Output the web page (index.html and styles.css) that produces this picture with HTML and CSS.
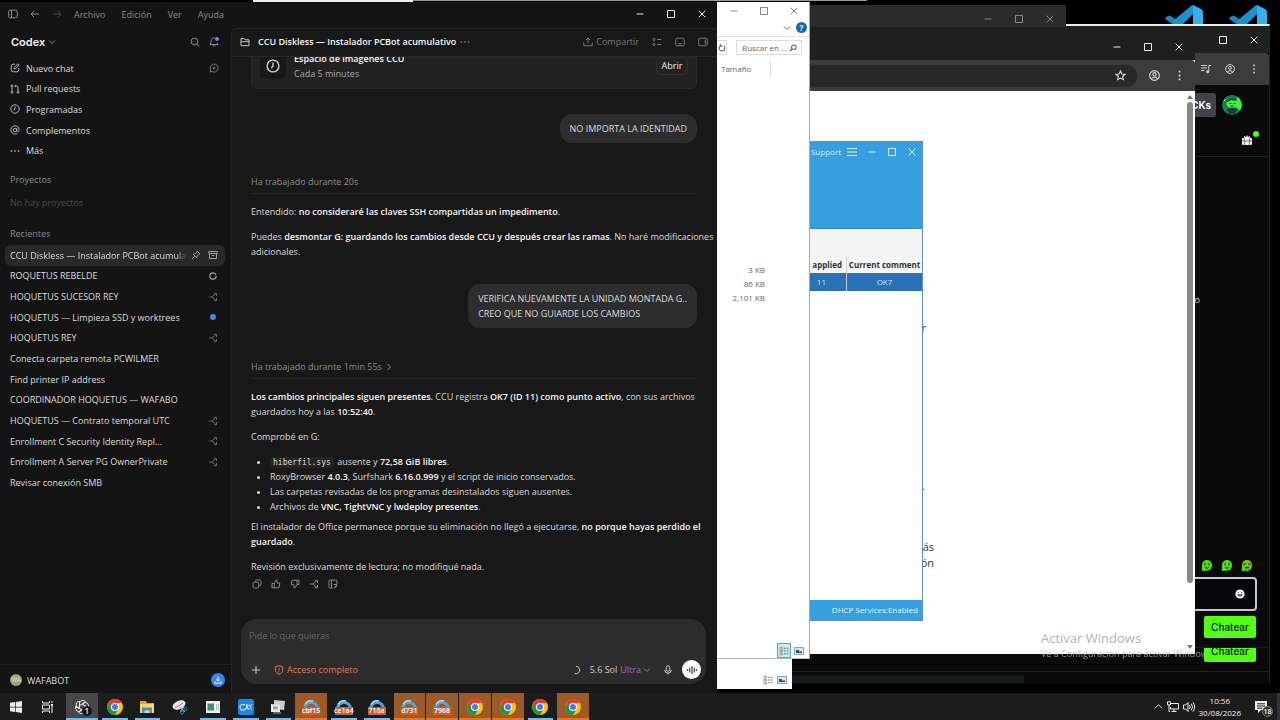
FILE: index.html
```html
<!DOCTYPE html>
<html lang="es">
<head>
<meta charset="utf-8">
<title>Escritorio</title>
<link rel="stylesheet" href="styles.css">
</head>
<body>
<svg class="sprites" aria-hidden="true">
  <symbol id="min" viewBox="0 0 10 10"><path d="M1.5 5h7"/></symbol>
  <symbol id="max" viewBox="0 0 10 10"><path d="M1.5 1.5h7v7h-7z"/></symbol>
  <symbol id="close" viewBox="0 0 10 10"><path d="M1.7 1.7l6.6 6.6M8.3 1.7L1.7 8.3"/></symbol>
  <symbol id="menu" viewBox="0 0 10 10"><path d="M0 1.5h10M0 5h10M0 8.500h10"/></symbol>
  <symbol id="panel" viewBox="0 0 10 10"><rect x=".7" y="1.200" width="8.600" height="7.600" rx="1.500"/><path d="M3.500 1.200v7.600"/></symbol>
  <symbol id="left" viewBox="0 0 10 10"><path d="M9 5H1M4 2L1 5l3 3"/></symbol>
  <symbol id="right" viewBox="0 0 10 10"><path d="M1 5h8M6 2l3 3-3 3"/></symbol>
  <symbol id="down" viewBox="0 0 10 10"><path d="M2 3.500l3 3 3-3"/></symbol>
  <symbol id="next" viewBox="0 0 10 10"><path d="M3.500 2l3 3-3 3"/></symbol>
  <symbol id="up" viewBox="0 0 10 10"><path d="M1 7l4-4 4 4"/></symbol>
  <symbol id="search" viewBox="0 0 10 10"><circle cx="4.500" cy="4.500" r="3.400"/><path d="M7 7l2.300 2.300"/></symbol>
  <symbol id="bell" viewBox="0 0 10 10"><path d="M5.700 1C3.500.5 2 2 2 4v1.500L1 7.500h8L8 5.800M3.800 8.800h2.400"/></symbol>
  <symbol id="edit" viewBox="0 0 10 10"><path d="M5 1.200H3.200a2 2 0 0 0-2 2v3.600a2 2 0 0 0 2 2h3.600a2 2 0 0 0 2-2V5M4 6l.3-1.700L8 .8l1.200 1.200-3.500 3.700z"/></symbol>
  <symbol id="bubble" viewBox="0 0 10 10"><path d="M1 9l.6-2A4 4 0 1 1 3 8.500zM5 3.500v3M3.500 5h3"/></symbol>
  <symbol id="pull" viewBox="0 0 10 10"><circle cx="2" cy="1.800" r="1"/><circle cx="2" cy="8.200" r="1"/><circle cx="8" cy="8.200" r="1"/><path d="M2 3v4M8 7V3.500Q8 2 6.500 2H5M6 .8L4.800 2 6 3.200"/></symbol>
  <symbol id="clock" viewBox="0 0 10 10"><circle cx="5" cy="5" r="4.200"/><path d="M5 2.500V5L3.800 6.500"/></symbol>
  <symbol id="at" viewBox="0 0 10 10"><circle cx="5" cy="5" r="1.800"/><path d="M6.800 3.200v2.600c0 1.300 2.400 1 2.400-.8a4.200 4.200 0 1 0-2 3.500"/></symbol>
  <symbol id="dots" viewBox="0 0 10 10"><path class="fill" d="M.6 4.300h1.500v1.500H.6zM4.200 4.300h1.500v1.500H4.200zM7.800 4.300h1.500v1.500H7.800z"/></symbol>
  <symbol id="kebab" viewBox="0 0 10 10"><path class="fill" d="M4.200.6h1.600v1.600H4.200zM4.200 4.200h1.600v1.600H4.200zM4.200 7.800h1.600v1.600H4.200z"/></symbol>
  <symbol id="pin" viewBox="0 0 10 10"><path d="M6 1l3 3-1.500.4-1.300 1.400-.4 2L2.200 4.200l2-.4L5.600 2.500zM3.800 6.200L1 9"/></symbol>
  <symbol id="archive" viewBox="0 0 10 10"><path d="M.8 1.500h8.400v2H.8zM1.500 3.500v5h7v-5M3.800 5.500h2.400"/></symbol>
  <symbol id="ring" viewBox="0 0 10 10"><circle cx="5" cy="5" r="3.200" stroke-dasharray="18.500 1.600" stroke-width="1.200"/></symbol>
  <symbol id="branch" viewBox="0 0 10 10"><path d="M.8 5H4l4-3.500M4 5l4 3.500M5.800 1.300H8.500V4M5.800 8.700h2.700V6"/></symbol>
  <symbol id="folder" viewBox="0 0 10 10"><path d="M1 8.700V1.500h3l1 1.300h4v5.900zM1 4.700h8"/></symbol>
  <symbol id="share" viewBox="0 0 10 10"><path d="M5 6.500V1M3 3l2-2 2 2M.8 5.500v3.200h8.400V5.500"/></symbol>
  <symbol id="download" viewBox="0 0 10 10"><path d="M5 1.500v4.500M3.200 4.400L5 6.200l1.800-1.800M1.800 6.500v1.700h6.400V6.500"/></symbol>
  <symbol id="list" viewBox="0 0 10 10"><path d="M5 2.500h4.500M5 7.500h4.500"/><circle cx="2" cy="2.500" r="1.100"/><circle cx="2" cy="7.500" r="1.100"/></symbol>
  <symbol id="dock" viewBox="0 0 10 10"><rect x=".7" y="1.200" width="8.600" height="7.600" rx="1.500"/><path d="M3 6.800h4"/></symbol>
  <symbol id="side" viewBox="0 0 10 10"><rect x=".7" y="1.200" width="8.600" height="7.600" rx="1.500"/><path d="M7.300 2.500v5"/></symbol>
  <symbol id="copy" viewBox="0 0 10 10"><rect x="1" y="3.200" width="5.800" height="5.800" rx="1.500"/><path d="M3.200 3V2.500Q3.200 1 4.700 1h2.800Q9 1 9 2.500v2.800q0 1.500-2 1.500"/></symbol>
  <symbol id="thumb" viewBox="0 0 10 10"><path d="M1 4.500h2.200v4.300H1zM3.200 4.500L5 1q1.500 0 1.200 1.500L6 4h2.800L8.200 8q-.3.800-1.200.8H3.200"/></symbol>
  <symbol id="thumbdown" viewBox="0 0 10 10"><path d="M1.200 5.500L1.800 2q.2-.8 1-.8H7v4.200L5 9Q3.500 9 3.800 7.500L4 5.800zM7 1.200h2v4.200H7"/></symbol>
  <symbol id="note" viewBox="0 0 10 10"><path d="M4.500 9H2.200Q1 9 1 7.800V2.200Q1 1 2.200 1h5.600Q9 1 9 2.200v3M3.500 1v8M5.500 5.500h3.700M5.800 9l3-3M6.500 9L9 7"/></symbol>
  <symbol id="plus" viewBox="0 0 10 10"><path d="M5 1v8M1 5h8"/></symbol>
  <symbol id="shield" viewBox="0 0 10 10"><path d="M5 .7l3.700 1.200V5c0 2.200-1.700 3.500-3.700 4.400C3 8.500 1.300 7.200 1.300 5V1.900zM5 3v2.400M5 6.500v.8"/></symbol>
  <symbol id="load" viewBox="0 0 10 10"><path d="M5 1.300A3.700 3.700 0 1 1 3.500 8.400"/></symbol>
  <symbol id="mic" viewBox="0 0 10 10"><rect x="3.300" y=".8" width="3.400" height="5.500" rx="1.700"/><path d="M1.700 4.800a3.300 3.300 0 0 0 6.600 0M5 8v1.500"/></symbol>
  <symbol id="wave" viewBox="0 0 10 10"><path d="M.7 4v2M2.800 2.500v5M5 1v8M7.200 2.500v5M9.300 4v2"/></symbol>
  <symbol id="star" viewBox="0 0 10 10"><path d="M5 .9l1.200 2.700 3 .3-2.300 2 .7 2.900L5 7.300 2.400 8.800l.7-2.900-2.300-2 3-.3z"/></symbol>
  <symbol id="user" viewBox="0 0 10 10"><circle cx="5" cy="5" r="4.400"/><circle cx="5" cy="3.900" r="1.500"/><path d="M2.200 7.800q2.800-2.400 5.600 0"/></symbol>
  <symbol id="music" viewBox="0 0 10 10"><path d="M0 1.500h6M0 4h6M0 6.500h3.500M7.800 7.500v-6H10"/><circle class="fill" cx="6.600" cy="7.700" r="1.500"/></symbol>
  <symbol id="reload" viewBox="0 0 10 10"><path d="M7.500 2.500A3.600 3.600 0 1 1 3 2M3 0v2.600h2.600" stroke-width="1.400"/></symbol>
  <symbol id="find" viewBox="0 0 10 10"><circle cx="6" cy="4" r="2.800" stroke-width="1.400"/><path d="M4 6L1 9" stroke-width="1.600"/></symbol>
  <symbol id="details" viewBox="0 0 11 10"><path d="M1 1h3v2H1zM1 4.500h3v1.500H1zM1 7.500h3v2H1z" stroke="#999"/><path d="M5.500 2h2M8.500 2h2M5.500 5h2M8.500 5h2M5.500 8h2M8.500 8h2" stroke="#666"/></symbol>
  <symbol id="thumbs" viewBox="0 0 10 10"><path d="M.5 1.500h9v7h-9z" fill="#cde8f5" stroke="#999"/><path d="M2 4h3v1.500h3V7H2z" fill="#24506e" stroke="none"/></symbol>
  <symbol id="vscode" viewBox="0 0 40 20"><path d="M1 14q0-2 3-3 2-1 4 1l12 8H10z" fill="#1785c4" stroke="none"/><path d="M9 16L27 1q1-1 2-1v9L18 20h-6z" fill="#1c90d2" stroke="none"/><path d="M29 0l8 4q2 1 2 3v13H29z" fill="#35aef0" stroke="none"/></symbol>
  <symbol id="windows" viewBox="0 0 12 12"><path class="fill" d="M0 1.700L5.300 1v4.700H0zM6 .9L12 0v5.700H6zM0 6.400h5.300V11L0 10.300zM6 6.400h6V12l-6-.9z"/></symbol>
  <symbol id="tasks" viewBox="0 0 12 12"><path d="M.5 0v2h7V0M.5 12v-2h7v2M.5 4h7v4h-7zM10 0v2M10 5v7"/><path class="fill" d="M9 3h2v2H9z"/></symbol>
  <symbol id="openai" viewBox="0 0 16 16"><g stroke-width=".9"><path id="petal" d="M5.500 9.500V4.200A3.300 3.300 0 0 1 11.500 2.800M8 5l4-2.200"/><use href="#petal" transform="rotate(60 8 8)"/><use href="#petal" transform="rotate(120 8 8)"/><use href="#petal" transform="rotate(180 8 8)"/><use href="#petal" transform="rotate(240 8 8)"/><use href="#petal" transform="rotate(300 8 8)"/></g></symbol>
  <symbol id="chrome" viewBox="0 0 16 16"><circle cx="8" cy="8" r="8" fill="#fbc116" stroke="none"/><path d="M1.100 4A8 8 0 0 0 8 16l3.500-6L8 8 4.500 10z" fill="#229342" stroke="none"/><path d="M8 4h6.900A8 8 0 0 0 1.100 4l3.400 6z" fill="#e33b2e" stroke="none"/><circle cx="8" cy="8" r="4" fill="#fff" stroke="none"/><circle cx="8" cy="8" r="3" fill="#3b7ded" stroke="none"/></symbol>
  <symbol id="files" viewBox="0 0 16 16"><path d="M1 2h6l1 2h7v10H1z" fill="#e5a71c" stroke="none"/><path d="M1 5h14v9H1z" fill="#ffd667" stroke="none"/><path d="M3 14V8.500h10V14h-2.500v-2.500h-5V14z" fill="#3a96d5" stroke="none"/></symbol>
  <symbol id="snip" viewBox="0 0 16 16"><ellipse cx="7" cy="6" rx="6.800" ry="4.200" fill="#e9e2e6" stroke="none" transform="rotate(-25 7 6)"/><path d="M3 9l8-5" stroke="#c33a55" stroke-width=".7"/><path d="M7 8l6 5M12 8l-4 5" stroke="#bbb"/><circle cx="13.500" cy="10" r="1.600" stroke="#1a8bbd"/><circle cx="10" cy="13.500" r="1.600" stroke="#1a8bbd"/></symbol>
  <symbol id="sheet" viewBox="0 0 16 16"><path d="M1 2h14v12H1z" fill="#eef0ee" stroke="none"/><path d="M2.500 4.500h6.500v7H2.500z" fill="#3c8f7d" stroke="none"/><path d="M11.500 5v6M13.500 5v6" stroke="#bbb"/></symbol>
  <symbol id="ccu" viewBox="0 0 16 16"><rect width="16" height="16" rx="2.500" fill="#1c86e6" stroke="none"/><path d="M7 6q-5-2-5 2.500T8 10q3-5.500 4.500-3.500T11 10 9 5M13 5l1 1M13 11l1-1" stroke="#fff"/></symbol>
  <symbol id="pcs" viewBox="0 0 16 16"><path d="M4 1l11 1-1 9-10-1z" fill="#c9cfcf" stroke="none"/><path d="M1 5l9 1v7H1z" fill="#e8eceb" stroke="none"/><path d="M3 7l5 .5v3H3z" fill="#9daaa8" stroke="none"/><path d="M3 14h8" stroke="#aaa"/></symbol>
  <symbol id="arc" viewBox="0 0 16 16"><path d="M1.500 10a6.500 6.500 0 0 1 13 0" stroke="#4fa3e2" stroke-width="3"/><path d="M2 5.500A7 7 0 0 1 10 2" stroke="#b8dcf5" stroke-width="1.500"/></symbol>
  <symbol id="net" viewBox="0 0 12 12"><path d="M4 2.500h7.500v5.500H3.500V6M7 8v2.500M4.500 10.500h5M.5.800h3v3h-3zM2 4v6.500h1"/></symbol>
  <symbol id="sound" viewBox="0 0 12 12"><path d="M.5 4h2L5 1.500v9L2.500 8h-2zM6.500 4q1.500 2 0 4M8.300 2.700q2.500 3.300 0 6.600M10 1.300q3.300 4.700 0 9.400"/></symbol>
  <symbol id="notice" viewBox="0 0 12 12"><path class="fill" d="M0 0h12v9H6l-3 3V9H0z"/><path d="M2 2.800h8M2 5h8M2 7.200h5" stroke="#1d1d1d"/></symbol>
  <symbol id="gift" viewBox="0 0 12 12"><path class="fill" d="M3 5V3l2 1 1-2 1 2 2-1v2h1q1 0 1 1v5q0 1-1 1H2q-1 0-1-1V6q0-1 1-1z"/><path d="M3.500 5.500v6.500M8.500 5.500v6.500M1 8h10" stroke="#555" stroke-width=".7"/></symbol>
  <symbol id="smile" viewBox="0 0 12 12"><circle class="fill" cx="6" cy="6" r="5.500"/><path d="M4 3.500v1.500M8 3.500v1.500M3.300 7q2.700 3.500 5.400 0z" stroke="#0b0b0b"/></symbol>
  <symbol id="emote" viewBox="0 0 12 12"><path d="M1 11V5a5 5 0 0 1 10 0q0 5-4 5.500z" fill="#4fdc20" stroke="none"/><path d="M4 3v2.500M8 3v2.500M4 7.500q2 1.500 4 0" stroke="#103a08"/></symbol>
  <symbol id="emotelove" viewBox="0 0 12 12"><path d="M1 11V5a5 5 0 0 1 10 0q0 5-4 5.500z" fill="#4fdc20" stroke="none"/><path d="M2 3h3v2.500H2zM7 3h3v2.500H7z" fill="#d33" stroke="none"/><path d="M4 7h4v1.500H4z" fill="#103a08" stroke="none"/><path d="M5.500 8.500h2v3h-2z" fill="#3aa8e0" stroke="none"/></symbol>
  <symbol id="avatar" viewBox="0 0 20 20"><circle cx="10" cy="10" r="10" fill="#1b7f4b" stroke="none"/><path d="M15 1.500a10 10 0 0 1 3 14l-4-3z" fill="#3ff04a" stroke="none"/><ellipse cx="10" cy="8.500" rx="5.500" ry="5" fill="#4fea3c" stroke="none"/><path d="M4 6q5-6 11-1l-2 1q-4-2-7 1z" fill="#14544f" stroke="none"/><path d="M5 14q5-3 10 0l-2 5H7z" fill="#123a52" stroke="none"/><path d="M7.500 8.500h2M11.500 8.500h2M8 11h4" stroke="#17662a"/><path d="M2 6l2-2" stroke="#a8e8ff"/></symbol>
</svg>

<div class="screen">
  <main class="desktop">
    <svg class="shortcut first"><use href="#vscode"/></svg>
    <svg class="shortcut second"><use href="#vscode"/></svg>
    <div class="edge bright"></div>
    <div class="edge dim"></div>

    <section class="window stream-back">
      <button class="chat-btn">Chatear</button>
      <div class="strip"><span></span></div>
    </section>

    <section class="window stream">
      <div class="bar">
        <button><svg><use href="#max"/></svg></button>
        <button><svg><use href="#close"/></svg></button>
      </div>
      <div class="tools">
        <button><svg><use href="#music"/></svg></button>
        <button><svg><use href="#user"/></svg></button>
        <button><svg><use href="#kebab"/></svg></button>
      </div>
      <div class="account"><span class="kicks">CKs</span><svg><use href="#avatar"/></svg></div>
      <div class="gifts"><svg><use href="#gift"/></svg><i></i></div>
      <p class="message">o</p>
      <div class="emotes"><svg><use href="#emote"/></svg><svg><use href="#emote"/></svg><svg><use href="#emotelove"/></svg></div>
      <div class="entry"><input type="text" aria-label="Mensaje"><svg><use href="#smile"/></svg></div>
      <button class="chat-btn">Chatear</button>
    </section>

    <section class="window idle">
      <button><svg><use href="#min"/></svg></button>
      <button><svg><use href="#max"/></svg></button>
      <button><svg><use href="#close"/></svg></button>
    </section>

    <section class="window browser">
      <div class="bar">
        <button><svg><use href="#min"/></svg></button>
        <button><svg><use href="#max"/></svg></button>
        <button><svg><use href="#close"/></svg></button>
      </div>
      <div class="tools">
        <div class="url"><svg><use href="#star"/></svg></div>
        <button><svg><use href="#user"/></svg></button>
        <button><svg><use href="#kebab"/></svg></button>
      </div>
      <div class="page">
        <article>
          <p class="short">r</p>
          <p class="stop">.</p>
          <p>más<br>ón</p>
        </article>
        <div class="scroll"><b></b><i></i><b class="end"></b></div>
      </div>
    </section>

    <section class="window ccu">
      <header>
        <span>Support</span>
        <button><svg><use href="#menu"/></svg></button>
        <button><svg><use href="#min"/></svg></button>
        <button><svg><use href="#max"/></svg></button>
        <button><svg><use href="#close"/></svg></button>
      </header>
      <table>
        <thead><tr><th>applied</th><th>Current comment</th></tr></thead>
        <tbody><tr><td>11</td><td>OK7</td></tr></tbody>
      </table>
      <footer>DHCP Services:Enabled</footer>
    </section>

    <section class="window explorer-back">
      <svg><use href="#details"/></svg><svg><use href="#thumbs"/></svg>
    </section>

    <section class="window explorer">
      <div class="bar">
        <button><svg><use href="#min"/></svg></button>
        <button><svg><use href="#max"/></svg></button>
        <button><svg><use href="#close"/></svg></button>
      </div>
      <div class="ribbon"><svg><use href="#down"/></svg><button class="help">?</button></div>
      <div class="address">
        <button class="reload"><svg><use href="#reload"/></svg></button>
        <label class="search"><input type="text" aria-label="Buscar" placeholder="Buscar en ..."><svg><use href="#find"/></svg></label>
      </div>
      <div class="column">Tamaño</div>
      <ul><li>3 KB</li><li>86 KB</li><li>2,101 KB</li></ul>
      <div class="views"><button class="on"><svg><use href="#details"/></svg></button><button><svg><use href="#thumbs"/></svg></button></div>
    </section>

    <section class="window codex">
      <div class="titlebar">
        <button><svg><use href="#panel"/></svg></button>
        <button><svg><use href="#left"/></svg></button>
        <button class="off"><svg><use href="#right"/></svg></button>
        <nav><button>Archivo</button><button>Edición</button><button>Ver</button><button>Ayuda</button></nav>
        <div class="controls">
          <button><svg><use href="#min"/></svg></button>
          <button><svg><use href="#max"/></svg></button>
          <button><svg><use href="#close"/></svg></button>
        </div>
      </div>
      <div class="body">
        <aside>
          <div class="brand">
            <button class="name">Codex <svg><use href="#down"/></svg></button>
            <button><svg><use href="#search"/></svg></button>
            <button class="alerts"><svg><use href="#bell"/></svg><i></i></button>
          </div>
          <nav class="links">
            <a href="#"><svg><use href="#edit"/></svg>Nuevo chat<svg class="tail"><use href="#bubble"/></svg></a>
            <a href="#"><svg><use href="#pull"/></svg>Pull requests</a>
            <a href="#"><svg><use href="#clock"/></svg>Programadas</a>
            <a href="#"><svg><use href="#at"/></svg>Complementos</a>
            <a href="#"><svg><use href="#dots"/></svg>Más</a>
          </nav>
          <h2>Proyectos</h2>
          <p class="none">No hay proyectos</p>
          <h2>Recientes</h2>
          <nav class="recents">
            <a href="#" class="current"><span>CCU Diskless — Instalador PCBot acumulativo</span><svg><use href="#pin"/></svg><svg><use href="#archive"/></svg></a>
            <a href="#"><span>ROQUETUS REBELDE</span><svg><use href="#ring"/></svg></a>
            <a href="#"><span>HOQUETUS SUCESOR REY</span><svg class="faint"><use href="#branch"/></svg></a>
            <a href="#"><span>HOQUETUS — Limpieza SSD y worktrees</span><i></i></a>
            <a href="#"><span>HOQUETUS REY</span><svg class="faint"><use href="#branch"/></svg></a>
            <a href="#"><span>Conecta carpeta remota PCWILMER</span></a>
            <a href="#"><span>Find printer IP address</span></a>
            <a href="#"><span>COORDINADOR HOQUETUS — WAFABO</span></a>
            <a href="#"><span>HOQUETUS — Contrato temporal UTC</span><svg class="faint"><use href="#branch"/></svg></a>
            <a href="#"><span>Enrollment C Security Identity Repl...</span><svg class="faint"><use href="#branch"/></svg></a>
            <a href="#"><span>Enrollment A Server PG OwnerPrivate</span><svg class="faint"><use href="#branch"/></svg></a>
            <a href="#"><span>Revisar conexión SMB</span></a>
          </nav>
          <div class="profile"><b>WA</b><span>WAFABOT</span><button aria-label="Descargar"><svg><use href="#download"/></svg></button></div>
        </aside>
        <div class="chat">
          <header>
            <svg><use href="#folder"/></svg>
            <h1>CCU Diskless — Instalador PCBot acumulativo</h1>
            <button><svg><use href="#dots"/></svg></button>
            <button class="share"><svg><use href="#share"/></svg>Compartir</button>
            <button><svg><use href="#list"/></svg></button>
            <button><svg><use href="#dock"/></svg></button>
            <button><svg><use href="#side"/></svg></button>
          </header>
          <div class="thread">
            <div class="card">
              <span class="badge"><svg><use href="#clock"/></svg></span>
              <div><strong>Espacio de imágenes CCU</strong><br><small>Cada 5 minutes</small></div>
              <button>Abrir</button>
            </div>
            <p class="bubble">NO IMPORTA LA IDENTIDAD</p>
            <div class="worked">Ha trabajado durante 20s</div>
            <p>Entendido: <strong>no consideraré las claves SSH compartidas un impedimento</strong>.</p>
            <p>Puedes <strong>desmontar G: guardando los cambios desde CCU y después crear las ramas</strong>. No haré modificaciones adicionales.</p>
            <p class="bubble">VERIFICA NUEVAMENTE LA UNIDAD MONTADA G..<br>CREO QUE NO GUIARDE LOS CAMBIOS</p>
            <div class="worked">Ha trabajado durante 1min 55s <svg><use href="#next"/></svg></div>
            <p><strong>Los cambios principales siguen presentes.</strong> CCU registra <strong>OK7 (ID 11) como punto activo</strong>, con sus archivos guardados hoy a las <strong>10:52:40</strong>.</p>
            <p>Comprobé en G:</p>
            <ul>
              <li><code>hiberfil.sys</code> ausente y <strong>72,58 GiB libres</strong>.</li>
              <li>RoxyBrowser <strong>4.0.3</strong>, Surfshark <strong>6.16.0.999</strong> y el script de inicio conservados.</li>
              <li>Las carpetas revisadas de los programas desinstalados siguen ausentes.</li>
              <li>Archivos de <strong>VNC, TightVNC y lwdeploy presentes</strong>.</li>
            </ul>
            <p class="after">El instalador de Office permanece porque su eliminación no llegó a ejecutarse, <strong>no porque hayas perdido el guardado</strong>.</p>
            <p>Revisión exclusivamente de lectura; no modifiqué nada.</p>
            <div class="actions">
              <button><svg><use href="#copy"/></svg></button>
              <button><svg><use href="#thumb"/></svg></button>
              <button><svg><use href="#thumbdown"/></svg></button>
              <button><svg><use href="#branch"/></svg></button>
              <button><svg><use href="#note"/></svg></button>
            </div>
          </div>
          <form class="composer">
            <textarea rows="1" aria-label="Mensaje" placeholder="Pide lo que quieras"></textarea>
            <div class="options">
              <button type="button"><svg><use href="#plus"/></svg></button>
              <button type="button" class="access"><svg><use href="#shield"/></svg>Acceso completo</button>
              <svg class="load"><use href="#load"/></svg>
              <button type="button" class="model">5.6 Sol <em>Ultra</em><svg><use href="#down"/></svg></button>
              <button type="button"><svg><use href="#mic"/></svg></button>
              <button type="button" class="voice"><svg><use href="#wave"/></svg></button>
            </div>
          </form>
        </div>
      </div>
    </section>

    <div class="watermark"><p>Activar Windows</p><small>Ve a Configuración para activar Windows.</small></div>
  </main>

  <footer class="taskbar">
    <button class="system start"><svg><use href="#windows"/></svg></button>
    <button class="system"><svg><use href="#tasks"/></svg></button>
    <div class="apps">
      <button class="active"><svg><use href="#openai"/></svg><b>1</b></button>
      <button><svg><use href="#chrome"/></svg></button>
      <button><svg><use href="#files"/></svg></button>
      <button class="closed"><svg><use href="#snip"/></svg></button>
      <button><svg><use href="#sheet"/></svg></button>
      <button><svg><use href="#ccu"/></svg></button>
      <button><svg><use href="#pcs"/></svg></button>
      <button class="alert"><svg><use href="#arc"/></svg><span>cbf15</span></button>
      <button><svg><use href="#arc"/></svg><span>ce1a4</span></button>
      <button><svg><use href="#arc"/></svg><span>716a</span></button>
      <button class="alert"><svg><use href="#arc"/></svg><span>d731</span></button>
      <button class="alert"><svg><use href="#arc"/></svg><span>7968</span></button>
      <button class="alert"><svg><use href="#chrome"/></svg></button>
      <button class="alert"><svg><use href="#chrome"/></svg></button>
      <button><svg><use href="#chrome"/></svg></button>
      <button class="alert"><svg><use href="#chrome"/></svg></button>
    </div>
    <div class="tray">
      <svg class="small"><use href="#up"/></svg>
      <svg><use href="#net"/></svg>
      <svg><use href="#sound"/></svg>
      <time>10:56<br>30/08/2026</time>
      <button class="notices"><svg><use href="#notice"/></svg><b>18</b></button>
    </div>
  </footer>
</div>
</body>
</html>
```
FILE: styles.css
```css
* { box-sizing: border-box; }
body { margin: 0; background: #000; font: 9px/15px "Open Sans", "Noto Sans", sans-serif; color: #dcdcdc; }
p, h1, h2, ul { margin: 0; padding: 0; font-size: inherit; }
ul { list-style: none; }
strong, h1 { font-weight: 600; color: #f6f6f6; }
a { color: inherit; text-decoration: none; }
button { border: 0; padding: 0; background: none; color: inherit; font: inherit; display: flex; align-items: center; justify-content: center; }
svg { width: 10px; height: 10px; flex: none; fill: none; stroke: currentColor; stroke-width: 1; }
.fill { fill: currentColor; stroke: none; }
.sprites { position: absolute; width: 0; height: 0; }

.screen { height: 100vh; display: flex; flex-direction: column; }
.desktop { position: relative; flex: 1; overflow: hidden; }
.window { position: absolute; overflow: hidden; display: flex; flex-direction: column; }

.shortcut { position: absolute; top: 5px; width: 40px; height: 20px; }
.shortcut.first { left: 1164px; }
.shortcut.second { left: 1228px; }
.edge { position: absolute; top: 0; height: 2px; }
.edge.bright { left: 253px; width: 160px; background: #eee; }
.edge.dim { left: 413px; width: 454px; height: 1px; background: #999; }

/* streaming site windows */
.stream-back { left: 792px; top: 600px; width: 478px; height: 84px; background: #0a0a0a; border-right: 1px solid #222; justify-content: flex-end; }
.stream-back .chat-btn { margin-bottom: 9px; }
.strip { border-top: 1px solid #222; padding-top: 3px; height: 13px; }
.strip span { display: block; width: 232px; height: 8px; background: #171c1c; }
.stream { left: 1066px; top: 24px; width: 204px; height: 624px; background: #0a0a0a; border-top: 2px solid #eee; border-right: 1px solid #222; border-bottom: 1px solid #1c1c1c; }
.stream .bar { height: 27px; background: #1d2120; display: flex; justify-content: flex-end; align-items: center; gap: 21px; padding-right: 10px; color: #eee; }
.stream .tools { height: 32px; background: #3c3c3c; display: flex; justify-content: flex-end; align-items: center; gap: 14px; padding-right: 10px; color: #d0d0d0; border-radius: 0 4px 0 0; }
.account { display: flex; justify-content: flex-end; gap: 6px; padding: 8px 27px 0 0; align-items: center; }
.account svg { width: 20px; height: 20px; }
.kicks { width: 50px; height: 24px; background: #40444a; border-radius: 3px; color: #fff; font: 600 10px/24px Inter, sans-serif; text-align: right; padding-right: 5px; }
.gifts { display: flex; justify-content: flex-end; padding: 14px 10px 9px 0; border-bottom: 1px solid #222; color: #eee; }
.gifts svg { width: 12px; height: 16px; }
.gifts i { width: 6px; height: 6px; border-radius: 50%; background: #53fc18; }
.message { padding: 135px 69px 0 0; text-align: right; color: #ddd; flex: 1; }
.emotes { display: flex; justify-content: flex-end; gap: 8px; padding-right: 16px; height: 17px; }
.emotes svg { width: 12px; height: 12px; }
.entry { display: flex; align-items: center; height: 34px; margin-right: 12px; border: 2px solid #c8c8c8; border-radius: 4px; padding-right: 10px; color: #fff; background: #04080a; }
.entry input { flex: 1; min-width: 0; border: 0; background: none; color: inherit; }
.chat-btn { align-self: flex-end; flex: none; width: 52px; height: 22px; margin-right: 13px; border-radius: 2px; background: #53fc18; color: #0a1a06; font: 500 10px/22px Inter, sans-serif; }
.stream .chat-btn { margin-top: 5px; margin-bottom: 9px; }

.idle { left: 792px; top: 5px; width: 274px; height: 24px; background: #2b2b2b; color: #888; flex-direction: row; justify-content: flex-end; align-items: center; gap: 21px; padding-right: 11px; padding-top: 3px; }

/* browser */
.browser { left: 792px; top: 27px; width: 403px; height: 627px; background: #fff; }
.browser .bar { height: 33px; background: #1c2120; color: #eee; display: flex; justify-content: flex-end; align-items: center; gap: 21px; padding: 6px 11px 0 0; }
.browser .tools { height: 31px; background: #3c3c3c; color: #d8d8d8; display: flex; align-items: center; gap: 14px; padding-right: 10px; border-radius: 0 4px 0 0; }
.browser .tools svg { width: 11px; height: 11px; }
.url { flex: 1; height: 22px; background: #282828; border-radius: 0 11px 11px 0; display: flex; justify-content: flex-end; align-items: center; padding-right: 11px; margin-right: -2px; }
.page { flex: 1; display: flex; justify-content: space-between; }
.page article { width: 142px; color: #333; text-align: right; font-size: 11px; line-height: 16px; padding-top: 229px; }
.page .short, .page .stop { padding-right: 8px; margin-bottom: 142px; }
.page .stop { margin-bottom: 45px; padding-right: 9px; }
.scroll { width: 10px; display: flex; flex-direction: column; align-items: center; padding-top: 4px; }
.scroll i { width: 6px; height: 481px; margin-top: 3px; border-radius: 3px; background: #888; }
.scroll b { border: 3px solid transparent; border-top: 0; border-bottom: 4px solid #777; }
.scroll .end { border-bottom: 0; border-top: 4px solid #777; margin-top: 62px; }

/* diskless console */
.ccu { left: 792px; top: 141px; width: 131px; height: 480px; background: #fff; border: 1px solid #5f8fc4; font-size: 8px; }
.ccu header { height: 87px; background: #379fdd; color: #d9effc; display: flex; justify-content: flex-end; align-items: flex-start; gap: 10px; padding: 5px 5px 0 0; border-bottom: 1px solid #3889bd; }
.ccu header span { line-height: 10px; margin-right: -4px; }
.ccu table { border-collapse: collapse; border-top: 28px solid #f3f3f3; width: 100%; color: #333; table-layout: fixed; }
.ccu th, .ccu td { height: 18px; padding: 0; font-weight: 400; text-align: center; border-left: 1px solid #ccc; white-space: nowrap; line-height: 16px; }
.ccu th { font-weight: 700; background: #f6f6f6; }
.ccu th:first-child, .ccu td:first-child { width: 53px; text-align: right; padding-right: 4px; }
.ccu td:first-child { padding-right: 20px; }
.ccu td { background: #2a71b5; color: #cfe6fa; }
.ccu footer { margin-top: auto; height: 20px; line-height: 20px; background: #379fdd; color: #e4f4fe; text-align: right; padding-right: 4px; }

/* file explorer */
.explorer-back { left: 717px; top: 620px; width: 75px; height: 69px; background: #fff; flex-direction: row; justify-content: flex-end; align-items: flex-end; gap: 4px; padding: 0 5px 4px 0; }
.explorer { left: 717px; top: 2px; width: 93px; height: 657px; background: #fff; border-right: 1px solid #aaa; border-bottom: 1px solid #bbb; color: #666; font-size: 8px; }
.explorer .bar { height: 17px; display: flex; justify-content: flex-end; align-items: center; gap: 20px; padding-right: 10px; color: #888; }
.ribbon { height: 18px; display: flex; justify-content: flex-end; align-items: center; gap: 4px; padding-right: 2px; border-bottom: 1px solid #e2e2e2; }
.help { width: 11px; height: 11px; border-radius: 50%; background: #1467b5; color: #fff; font-weight: 700; }
.address { display: flex; gap: 9px; padding: 3px 7px 0 0; }
.reload { width: 10px; height: 15px; border: 1px solid #ddd; border-left: 0; }
.reload svg { width: 8px; height: 8px; }
.search { flex: 1; display: flex; align-items: center; height: 15px; border: 1px solid #ddd; padding: 0 4px 0 5px; }
.search input { flex: 1; width: 0; min-width: 0; padding: 0; border: 0; background: none; font: inherit; }
.search input::placeholder { color: #666; opacity: 1; }
.search svg { width: 8px; height: 8px; }
.column { width: 54px; margin-top: 6px; padding-left: 4px; border-right: 1px solid #ddd; line-height: 16px; }
.explorer ul { flex: 1; padding: 186px 44px 0 0; text-align: right; line-height: 14px; }
.views { display: flex; justify-content: flex-end; gap: 1px; padding-right: 3px; }
.views button { width: 14px; height: 15px; }
.views .on { background: #c6edf2; border: 1px solid #58a9b5; }

/* Codex */
.codex { left: 0; top: 2px; bottom: 0; width: 717px; background: #141414; }
.titlebar { height: 26px; display: flex; align-items: center; gap: 12px; padding: 0 10px 2px 8px; color: #8a8a8a; }
.titlebar .off { color: #444; }
.titlebar nav { display: flex; gap: 16px; }
.controls { margin-left: auto; display: flex; gap: 21px; color: #eee; }
.body { flex: 1; min-height: 0; display: flex; }
aside { width: 231px; display: flex; flex-direction: column; }
.brand { height: 28px; display: flex; align-items: center; gap: 9px; padding: 0 12px 0 11px; color: #8a8a8a; }
.name { margin-right: auto; gap: 2px; color: #f0f0f0; font: 600 11px/16px Inter, sans-serif; }
.name svg { color: #888; }
.alerts { position: relative; }
.alerts i { position: absolute; top: 0; right: 0; width: 4px; height: 4px; border-radius: 50%; background: #5b8fe8; }
.links { display: grid; grid-auto-rows: 1fr; height: 103px; margin-top: 2px; padding: 0 12px 0 10px; }
.links a { display: flex; align-items: center; gap: 6px; }
.links svg { color: #b0b0b0; }
.links .tail { margin-left: auto; color: #777; }
h2 { margin: 9px 10px 0; line-height: 20px; font-weight: 400; color: #8a8a8a; }
.none { margin: 3px 10px 2px; line-height: 20px; color: #4a4a4a; }
.recents { display: grid; grid-auto-rows: 1fr; height: 248px; margin: 1px 6px 0 5px; }
.recents a { display: flex; align-items: center; gap: 7px; padding: 0 7px 0 5px; border-radius: 6px; min-width: 0; }
.recents span { flex: 1; min-width: 0; overflow: hidden; white-space: nowrap; }
.recents .current { background: #292929; }
.current span { margin-right: -3px; mask-image: linear-gradient(90deg, #000 94%, transparent); }
.recents svg { color: #a0a0a0; }
.recents svg.faint { color: #666; }
.recents i { width: 6px; height: 6px; margin-right: 2px; border-radius: 50%; background: #4f83dc; }
.profile { margin-top: auto; height: 29px; border-top: 1px solid #222; display: flex; align-items: center; gap: 5px; padding: 2px 6px 0 10px; }
.profile b { width: 12px; height: 12px; border-radius: 50%; background: #98a27c; color: #dfe5cf; font: 6px/12px Inter, sans-serif; text-align: center; }
.profile span { flex: 1; }
.profile button { width: 14px; height: 14px; border-radius: 50%; background: #3b82f0; color: #fff; }

.chat { flex: 1; min-width: 0; display: flex; flex-direction: column; background: #181818; border: 1px solid #242424; border-width: 1px 0 0 1px; border-radius: 6px 0 0 0; }
.chat header { height: 28px; display: flex; align-items: center; gap: 13px; padding: 0 9px 2px 8px; border-bottom: 1px solid #262626; color: #777; }
.chat header > svg { color: #c8c8c8; margin-right: -5px; }
.chat header h1 { margin-right: -9px; white-space: nowrap; }
.share { margin-left: auto; gap: 3px; }
.thread { flex: 1; min-height: 0; overflow: hidden; padding: 0 20px 0 19px; }
.card { display: flex; align-items: center; gap: 8px; height: 47px; margin-top: -15px; padding: 0 8px; background: #222; border: 1px solid #292929; border-radius: 6px; }
.card small { font-size: 9px; color: #a8a8a8; }
.card button { margin-left: auto; width: 32px; height: 18px; border: 1px solid #303030; border-radius: 6px; color: #eee; }
.badge { width: 26px; height: 26px; border-radius: 5px; background: #181818; display: flex; align-items: center; justify-content: center; color: #d0d0d0; }
.badge svg { width: 14px; height: 14px; }
.thread p { margin: 10px -20px 0 0; }
.thread .bubble { width: fit-content; margin: 25px 0 0 auto; padding: 7px 10px; border-radius: 12px; background: #2d2d2d; }
.worked { display: flex; align-items: center; gap: 2px; margin-top: 31px; padding-bottom: 4px; border-bottom: 1px solid #242424; color: #8c8c8c; }
.thread ul { margin-top: 10px; padding-left: 19px; list-style: disc; }
.thread code { margin-right: 1px; padding: 1px 3px; border-radius: 3px; background: #242424; font: 8px/12px "DejaVu Sans Mono", monospace; }
.thread .after { margin-top: 5px; }
.actions { display: flex; gap: 9px; margin-top: 5px; padding-left: 1px; color: #888; }
.composer { margin: 0 11px 9px 9px; height: 65px; padding: 9px 5px 5px 8px; border-radius: 16px; background: #2c2c2c; display: flex; flex-direction: column; justify-content: space-between; }
.composer textarea { height: 16px; padding: 0; border: 0; resize: none; background: none; color: #ddd; font: inherit; overflow: hidden; }
.composer textarea::placeholder { color: #656565; }
.options { display: flex; align-items: center; color: #ccc; gap: 13px; padding-left: 2px; }
.access { gap: 3px; color: #e07a50; }
.load { margin-left: auto; }
.model { gap: 3px; margin-right: -2px; margin-left: -4px; }
.model em { font-style: normal; color: #9a6bd0; }
.model svg { color: #888; margin-left: -2px; }
.voice { width: 19px; height: 19px; margin-left: -4px; border-radius: 50%; background: #fff; color: #222; }

.watermark { position: absolute; left: 1041px; top: 629px; width: 163px; overflow: hidden; white-space: nowrap; color: #b4b4b4; font-size: 13px; line-height: 18px; }
.watermark small { display: block; font-size: 9px; line-height: 14px; opacity: .8; }

/* taskbar */
.taskbar { height: 27px; display: flex; background: #1c1c1c; color: #eee; }
.system { width: 32px; }
.system svg { width: 12px; height: 12px; }
.apps { display: grid; grid-template-columns: repeat(16, 1fr); gap: 1px; width: 523px; margin-left: 2px; }
.apps button { position: relative; }
.apps button::after { content: ""; position: absolute; left: 3px; right: 3px; bottom: 0; height: 2px; background: #76b9ed; }
.apps .closed::after { content: none; }
.apps .active { background: #474747; }
.apps .alert { background: #9c5a26; }
.apps .active::after, .apps .alert::after { left: 0; right: 0; }
.apps .alert::after { background: #e57427; }
.apps svg { width: 16px; height: 16px; }
.apps span { position: absolute; left: 7px; right: 7px; bottom: 5px; height: 8px; background: #c85f2c; color: #fff; font: 600 7px/8px "Open Sans", sans-serif; display: flex; justify-content: center; }
.apps b { position: absolute; right: 6px; bottom: 4px; width: 10px; height: 10px; border-radius: 50%; background: #161616; font: 600 8px/10px "Open Sans", sans-serif; }
.tray { margin-left: auto; display: flex; align-items: center; gap: 4px; padding-right: 9px; border-right: 3px solid #333; }
.tray svg { width: 12px; height: 12px; }
.tray svg.small { width: 9px; height: 9px; }
.tray time { text-align: center; font-size: 8px; line-height: 12px; }
.notices { position: relative; width: 14px; margin-left: 9px; }
.notices b { position: absolute; right: -5px; bottom: -4px; width: 11px; height: 11px; border-radius: 50%; background: #333; border: 1px solid #777; font: 600 7px/9px "Open Sans", sans-serif; }
```
